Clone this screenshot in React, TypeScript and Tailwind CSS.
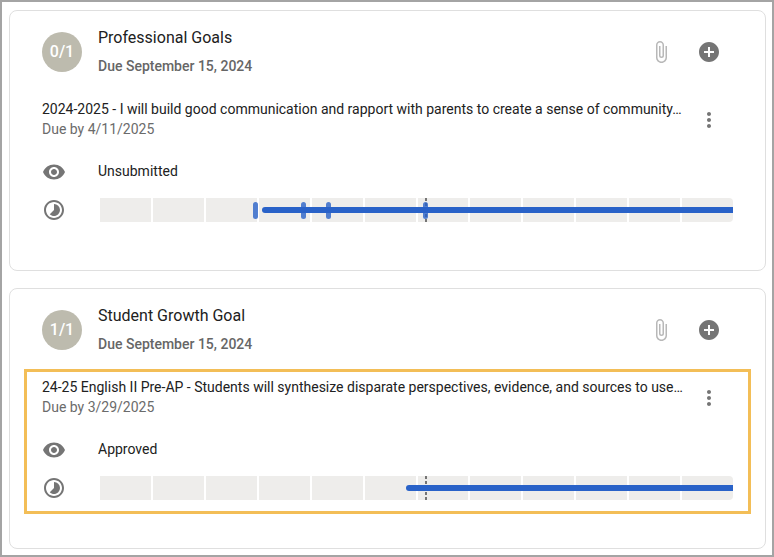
import React from 'react';
import { MdAddCircle, MdAttachFile, MdMoreVert, MdTimelapse, MdVisibility } from 'react-icons/md';

interface Goal {
  category: string;
  progress: string;
  due: string;
  title: string;
  dueBy: string;
  status: string;
  start: number;
  events: number[];
  highlighted?: boolean;
}

// start, events and TODAY are percentages of the school year
const TODAY = 51.5;

const goals: Goal[] = [
  {
    category: 'Professional Goals',
    progress: '0/1',
    due: 'Due September 15, 2024',
    title: '2024-2025 - I will build good communication and rapport with parents to create a sense of community…',
    dueBy: 'Due by 4/11/2025',
    status: 'Unsubmitted',
    start: 25.83,
    events: [24.41, 31.97, 35.91, 51.19],
  },
  {
    category: 'Student Growth Goal',
    progress: '1/1',
    due: 'Due September 15, 2024',
    title: '24-25 English II Pre-AP - Students will synthesize disparate perspectives, evidence, and sources to use…',
    dueBy: 'Due by 3/29/2025',
    status: 'Approved',
    start: 48.51,
    events: [],
    highlighted: true,
  },
];

const Timeline: React.FC<{ start: number; events: number[] }> = ({ start, events }) => (
  <div className="relative h-6 flex-1">
    <div className="grid h-full grid-cols-12 overflow-hidden rounded-r">
      {Array.from({ length: 12 }).map((_, i) => (
        <div key={i} className="border-l-2 border-white bg-[#eeedeb]"></div>
      ))}
    </div>
    {/* Today */}
    <div className="absolute inset-y-0 flex w-0.5 flex-col justify-between" style={{ left: `${TODAY}%` }}>
      {Array.from({ length: 5 }).map((_, i) => (
        <div key={i} className="h-[3px] bg-[#757575]"></div>
      ))}
    </div>
    <div className="absolute right-0 top-[9px] h-1.5 rounded-l-full bg-[#2962c8]" style={{ left: `${start}%` }}></div>
    {events.map((pos) => (
      <div key={pos} className="absolute top-1 h-[17px] w-[5px] rounded-full bg-[#2962c8]/80" style={{ left: `${pos}%` }}></div>
    ))}
  </div>
);

const GoalCard: React.FC<{ goal: Goal }> = ({ goal }) => (
  <section className="rounded-lg border border-[#dfdfdf] px-8 pt-[13px] pb-[34px]">
    <header className="flex items-center">
      <div className="flex size-10 shrink-0 items-center justify-center rounded-full bg-[#bdbbae] text-base font-medium text-white">
        {goal.progress}
      </div>
      <div className="ml-4 flex-1">
        <h2 className="text-base leading-7">{goal.category}</h2>
        <p className="text-sm leading-7 font-medium text-[#666666]">{goal.due}</p>
      </div>
      <button type="button" aria-label="Attachments" className="flex size-12 items-center justify-center text-[#b8b8b8]">
        <MdAttachFile size={24} />
      </button>
      <button type="button" aria-label="Add goal" className="flex size-12 items-center justify-center text-[#757575]">
        <MdAddCircle size={24} />
      </button>
    </header>

    <div className={`-mx-[18px] mt-[11px] border-3 px-[15px] pt-[5px] pb-[11px] ${goal.highlighted ? 'border-[#f3be57]' : 'border-transparent'}`}>
      <div className="flex h-10 items-start">
        <div className="min-w-0 flex-1 text-sm leading-5">
          <h3 className="truncate">{goal.title}</h3>
          <p className="text-[#6b6b6b]">{goal.dueBy}</p>
        </div>
        <button type="button" aria-label="More options" className="flex h-[42px] w-12 items-center justify-center text-[#757575]">
          <MdMoreVert size={24} />
        </button>
      </div>
      <div className="mt-[21px] flex h-6 items-start">
        <MdVisibility size={24} className="mr-8 text-[#757575]" />
        <span className="text-sm leading-[22px]">{goal.status}</span>
      </div>
      <div className="mt-3.5 flex items-center">
        <MdTimelapse size={24} className="mr-8 text-[#757575]" />
        <Timeline start={goal.start} events={goal.events} />
      </div>
    </div>
  </section>
);

const App: React.FC = () => {
  return (
    <main className="flex flex-col gap-[17px] border-2 border-[#a4a4a4] bg-white pt-2 pr-1.5 pb-1.5 pl-[7px] font-['Roboto',sans-serif] text-[#212121]">
      {goals.map((goal) => (
        <GoalCard key={goal.category} goal={goal} />
      ))}
    </main>
  );
};

export default App;
